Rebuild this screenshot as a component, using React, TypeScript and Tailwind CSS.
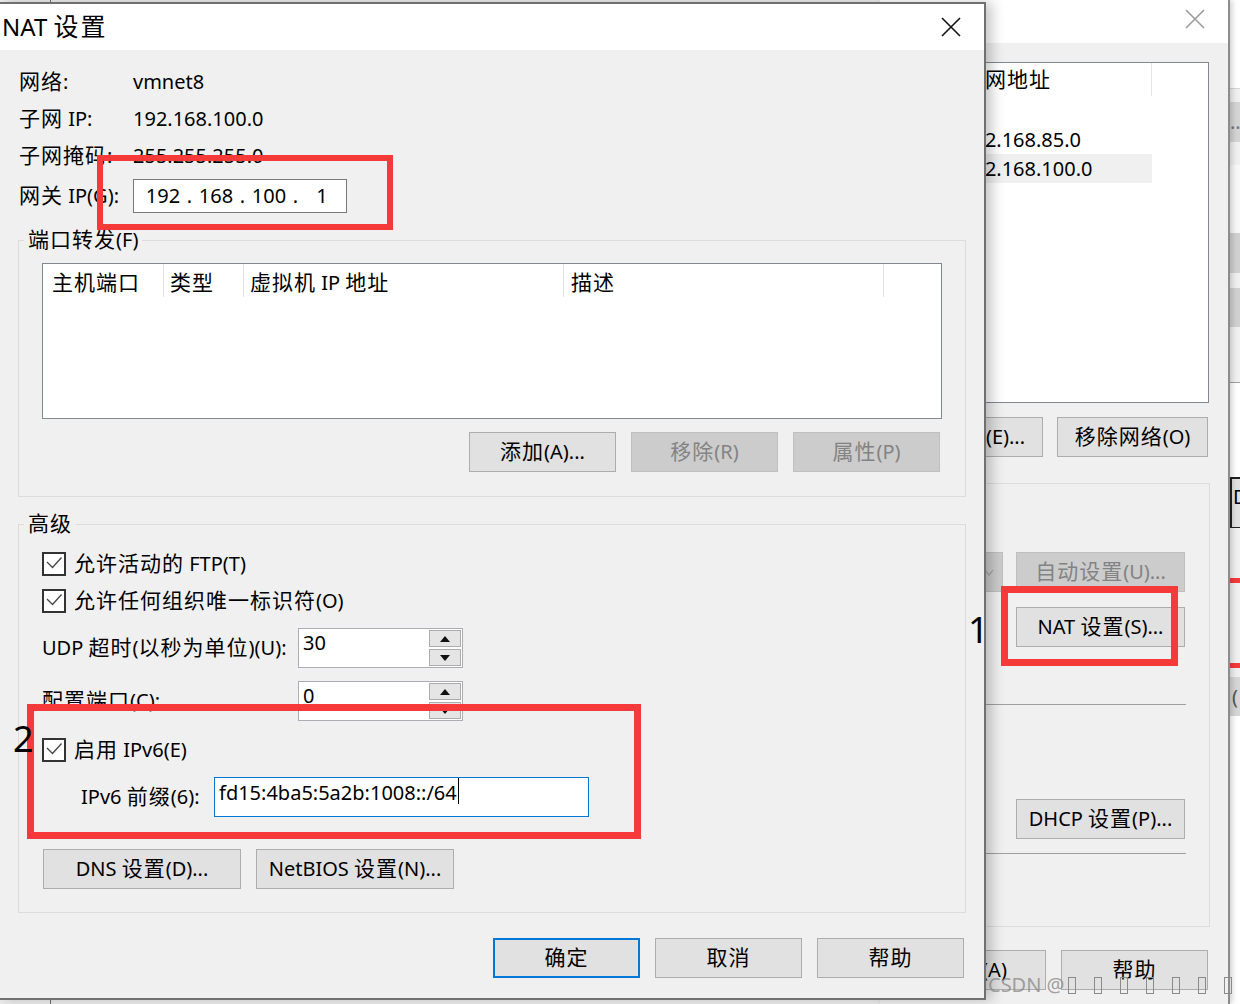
import clsx from "clsx";
import type { ReactNode } from "react";

const FONT = "font-['Noto_Sans','Noto_Sans_CJK_SC',sans-serif]";

// CJK runs render a touch larger than the latin text, as in the Windows dialog.
function cjk(s: string, big?: boolean): ReactNode[] {
  return s.split(/([\u2E80-\u9FFF\uF900-\uFAFF]+)/).map((part, i) =>
    /[\u2E80-\u9FFF\uF900-\uFAFF]/.test(part) ? (
      <span key={i} className={big ? "text-[25px] leading-none tracking-[2px]" : "text-[21px] leading-none tracking-[1px]"}>
        {part}
      </span>
    ) : (
      part
    ),
  );
}

type BtnProps = { label: string; w: string; disabled?: boolean; primary?: boolean; extra?: string };

function Btn({ label, w, disabled, primary, extra }: BtnProps) {
  return (
    <div
      className={clsx(
        "flex h-[40px] shrink-0 items-center justify-center whitespace-nowrap",
        w,
        extra,
        disabled
          ? "border border-[#bfbfbf] bg-[#cccccc] text-[#838383]"
          : primary
            ? "border-2 border-[#0078d7] bg-[#e1e1e1] text-black"
            : "border border-[#adadad] bg-[#e1e1e1] text-black",
      )}
    >
      <span>{cjk(label)}</span>
    </div>
  );
}

function CloseX({ color }: { color: string }) {
  return (
    <svg width="20" height="20" viewBox="0 0 20 20">
      <path d="M1 1 L19 19 M19 1 L1 19" stroke={color} strokeWidth="1.6" fill="none" />
    </svg>
  );
}

function Check({ label }: { label: string }) {
  return (
    <div className="flex h-[24px] items-center gap-[8px]">
      <svg width="24" height="24" viewBox="0 0 24 24" className="shrink-0">
        <rect x="1" y="1" width="22" height="22" fill="#fff" stroke="#333" strokeWidth="2" />
        <polyline points="5,10 10.5,15.5 19.5,5.5" fill="none" stroke="#444" strokeWidth="1.3" />
      </svg>
      <span className="whitespace-nowrap">{cjk(label)}</span>
    </div>
  );
}

function Arrow({ up }: { up?: boolean }) {
  return (
    <svg width="10" height="6" viewBox="0 0 10 6">
      <path d={up ? "M0 6 L5 0 L10 6 Z" : "M0 0 L5 6 L10 0 Z"} fill="#111" />
    </svg>
  );
}

function Spin({ value }: { value: string }) {
  return (
    <div className="flex h-[40px] w-[165px] border border-[#abadb3] bg-white">
      <div className="flex-1 pl-[4px] leading-[28px]">{value}</div>
      <div className="flex w-[33px] flex-col gap-[2px] py-px pr-px">
        <div className="flex flex-1 items-center justify-center border border-[#acacac] bg-[#e5e5e5]">
          <Arrow up />
        </div>
        <div className="flex flex-1 items-center justify-center border border-[#acacac] bg-[#e5e5e5]">
          <Arrow />
        </div>
      </div>
    </div>
  );
}

function InfoRow({ label, value }: { label: string; value: string }) {
  return (
    <div className="flex h-[37px] items-center">
      <span className="w-[114px] whitespace-nowrap">{cjk(label)}</span>
      <span>{value}</span>
    </div>
  );
}

function NatDialog() {
  const octets = ["192", "168", "100", "1"];
  return (
    <div className="absolute left-[-2px] top-[2px] flex h-[998px] w-[988px] flex-col border-2 border-[#707070] bg-[#f0f0f0] shadow-[6px_0_12px_rgba(0,0,0,0.22)]">
      <div className="flex h-[46px] shrink-0 items-center justify-between bg-white pl-[2px]">
        <span className="text-[24px] leading-[32px]">{cjk("NAT 设置", true)}</span>
        <div className="mr-[23px]">
          <CloseX color="#111" />
        </div>
      </div>

      <div className="flex flex-1 flex-col">
        <div className="flex flex-col pl-[19px] pt-[13px]">
          <InfoRow label="网络:" value="vmnet8" />
          <InfoRow label="子网 IP:" value="192.168.100.0" />
          <InfoRow label="子网掩码:" value="255.255.255.0" />
          <div className="mt-[5px] flex h-[34px] items-center">
            <span className="w-[114px] whitespace-nowrap">{cjk("网关 IP(G):")}</span>
            <div className="flex h-[34px] w-[214px] items-center border border-[#7a7a7a] bg-white pl-[6px]">
              {octets.map((o, i) => (
                <div key={i} className="flex items-center">
                  {i > 0 && <span className="w-[7px] text-center">.</span>}
                  <span className="w-[46px] text-center">{o}</span>
                </div>
              ))}
            </div>
          </div>
        </div>

        <fieldset className="ml-[18px] mt-[13px] w-[948px] border border-[#dcdcdc] p-0">
          <legend className="ml-[5px] h-[28px] px-[4px] leading-[28px]">{cjk("端口转发(F)")}</legend>
          <div className="flex flex-col pb-[24px] pl-[23px] pt-[9px]">
            <div className="h-[156px] w-[900px] border border-[#828790] bg-white">
              <div className="flex h-[33px] whitespace-nowrap">
                <div className="h-full w-[121px] border-r border-[#e5e5e5] pl-[9px] pt-[5px]">{cjk("主机端口")}</div>
                <div className="h-full w-[80px] border-r border-[#e5e5e5] pl-[6px] pt-[5px]">{cjk("类型")}</div>
                <div className="h-full w-[320px] border-r border-[#e5e5e5] pl-[6px] pt-[5px]">{cjk("虚拟机 IP 地址")}</div>
                <div className="h-full w-[320px] border-r border-[#e5e5e5] pl-[7px] pt-[5px]">{cjk("描述")}</div>
              </div>
            </div>
            <div className="mt-[13px] flex w-[898px] justify-end gap-[15px]">
              <Btn label="添加(A)..." w="w-[147px]" />
              <Btn label="移除(R)" w="w-[147px]" disabled />
              <Btn label="属性(P)" w="w-[147px]" disabled />
            </div>
          </div>
        </fieldset>

        <fieldset className="ml-[18px] mt-[13px] w-[948px] border border-[#dcdcdc] p-0">
          <legend className="ml-[5px] h-[28px] px-[4px] leading-[28px]">{cjk("高级")}</legend>
          <div className="flex flex-col pb-[23px] pl-[23px] pt-[14px]">
            <Check label="允许活动的 FTP(T)" />
            <div className="mt-[13px]">
              <Check label="允许任何组织唯一标识符(O)" />
            </div>
            <div className="mt-[15px] flex h-[40px] items-center">
              <span className="w-[256px] whitespace-nowrap">{cjk("UDP 超时(以秒为单位)(U):")}</span>
              <Spin value="30" />
            </div>
            <div className="mt-[13px] flex h-[40px] items-center">
              <span className="w-[256px] whitespace-nowrap">{cjk("配置端口(C):")}</span>
              <Spin value="0" />
            </div>
            <div className="mt-[17px]">
              <Check label="启用 IPv6(E)" />
            </div>
            <div className="ml-[39px] mt-[15px] flex h-[40px] items-center">
              <span className="w-[133px] whitespace-nowrap">{cjk("IPv6 前缀(6):")}</span>
              <div className="flex h-[40px] w-[375px] items-start border border-[#0078d7] bg-white pl-[4px]">
                <span className="pt-[2px] leading-[26px]">fd15:4ba5:5a2b:1008::/64</span>
                <span className="ml-px h-[26px] w-px bg-black" />
              </div>
            </div>
            <div className="ml-px mt-[32px] flex gap-[15px]">
              <Btn label="DNS 设置(D)..." w="w-[198px]" />
              <Btn label="NetBIOS 设置(N)..." w="w-[198px]" />
            </div>
          </div>
        </fieldset>

        <div className="mt-[25px] flex justify-end gap-[15px] pr-[20px]">
          <Btn label="确定" w="w-[147px]" primary />
          <Btn label="取消" w="w-[147px]" />
          <Btn label="帮助" w="w-[147px]" />
        </div>
      </div>
    </div>
  );
}

function NetworkEditor() {
  return (
    <div className="absolute left-[880px] top-0 flex h-[1004px] w-[350px] flex-col border-r-2 border-[#8c8c8c] bg-[#f0f0f0] shadow-[2px_0_6px_rgba(0,0,0,0.2)]">
      <div className="flex h-[43px] shrink-0 items-start justify-end bg-white pr-[23px] pt-[9px]">
        <CloseX color="#9a9a9a" />
      </div>
      <div className="flex flex-col items-end">
        <div className="mr-[19px] mt-[19px] h-[341px] w-[320px] border border-[#828790] bg-white">
          <div className="flex h-[33px] justify-end">
            <div className="h-full w-[197px] whitespace-nowrap border-r border-[#e5e5e5] pl-[8px] pt-[3px]">{cjk("子网地址")}</div>
            <div className="h-full w-[56px]" />
          </div>
          <div className="flex flex-col items-end pr-[56px]">
            <div className="h-[29px] w-[197px]" />
            <div className="h-[29px] w-[197px] pl-[7px] leading-[29px]">192.168.85.0</div>
            <div className="h-[29px] w-[197px] bg-[#f0f0f0] pl-[7px] leading-[29px]">192.168.100.0</div>
          </div>
        </div>
        <div className="mr-[20px] mt-[14px] flex gap-[14px]">
          <Btn label="添加网络(E)..." w="w-[147px]" extra="pr-[16px]" />
          <Btn label="移除网络(O)" w="w-[151px]" />
        </div>
        <div className="mr-[18px] mt-[26px] flex h-[444px] w-[320px] flex-col items-end border border-[#dcdcdc] pr-[24px] pt-[68px]">
          <div className="flex gap-[13px]">
            <div className="flex h-[40px] w-[120px] items-center justify-end border border-[#bfbfbf] bg-[#cccccc] pr-[8px]">
              <svg width="10" height="7" viewBox="0 0 10 7">
                <polyline points="1,1 5,6 9,1" fill="none" stroke="#a0a0a0" strokeWidth="1.2" />
              </svg>
            </div>
            <Btn label="自动设置(U)..." w="w-[169px]" disabled />
          </div>
          <div className="mt-[15px]">
            <Btn label="NAT 设置(S)..." w="w-[169px]" />
          </div>
          <div className="mr-[-1px] mt-[57px] h-px w-[250px] bg-[#a0a0a0]" />
          <div className="mt-[94px]">
            <Btn label="DHCP 设置(P)..." w="w-[169px]" />
          </div>
          <div className="mr-[-1px] mt-[14px] h-px w-[250px] bg-[#a0a0a0]" />
        </div>
        <div className="mr-[20px] mt-[23px] flex gap-[15px]">
          <Btn label="应用(A)" w="w-[147px]" />
          <Btn label="帮助" w="w-[147px]" />
        </div>
      </div>
    </div>
  );
}

function ThirdWindow() {
  return (
    <div className="absolute left-[1230px] top-0 flex h-[1004px] w-[10px] flex-col overflow-hidden bg-white">
      <div className="h-[88px] shrink-0 bg-white" />
      <div className="h-[14px] shrink-0 border-t border-[#d6d6d6] bg-[#f0f0f0]" />
      <div className="h-[40px] shrink-0 bg-[#d4d4d4] leading-[40px] text-[#777]">..</div>
      <div className="h-[23px] shrink-0 bg-[#f0f0f0]" />
      <div className="h-[68px] shrink-0 bg-[#f8f8f8]" />
      <div className="h-[40px] shrink-0 bg-[#d0d0d0]" />
      <div className="h-[15px] shrink-0 bg-[#f0f0f0]" />
      <div className="h-[39px] shrink-0 bg-[#d0d0d0]" />
      <div className="h-[55px] shrink-0 bg-[#f0f0f0]" />
      <div className="h-[95px] shrink-0 border-t border-[#a0a0a0] bg-white" />
      <div className="h-[51px] shrink-0 border-b border-l-2 border-t-2 border-[#222] bg-[#e1e1e1] pl-[1px] pt-[4px] leading-[28px]">D</div>
      <div className="h-[50px] shrink-0 bg-[#f0f0f0]" />
      <div className="h-[5px] shrink-0 bg-[#f63a3a]" />
      <div className="h-[80px] shrink-0 bg-[#f0f0f0]" />
      <div className="h-[5px] shrink-0 bg-[#f63a3a]" />
      <div className="h-[9px] shrink-0 bg-[#f0f0f0]" />
      <div className="h-[39px] shrink-0 bg-[#d6d6d6] pl-[2px] leading-[39px] text-[#555]">(</div>
      <div className="flex-1 bg-white" />
    </div>
  );
}

export default function App() {
  return (
    <div className={clsx("relative h-[1004px] w-[1240px] overflow-hidden bg-[#eeeeee] text-[20px] leading-[28px] text-black", FONT)}>
      <div className="absolute left-[50px] top-0 h-full w-px bg-[#6e6e6e]" />
      <ThirdWindow />
      <NetworkEditor />
      <NatDialog />

      {/* annotations drawn over the screenshot */}
      <div className="absolute left-[97px] top-[155px] h-[75px] w-[296px] border-[6px] border-[#f63a3a]" />
      <div className="absolute left-[27px] top-[704px] h-[135px] w-[614px] border-[7px] border-[#f63a3a]" />
      <div className="absolute left-[1001px] top-[586px] h-[80px] w-[177px] border-[7px] border-[#f63a3a]" />
      <div className="absolute left-[13px] top-[721px] text-[36px] leading-[36px]">2</div>
      <div className="absolute left-[968px] top-[612px] text-[36px] leading-[36px]">1</div>

      <div className="absolute left-[988px] top-[972px] flex items-center text-[20px] leading-[26px] text-[#8a8a8a]/80">
        <span>CSDN @</span>
        {[0, 1, 2, 3, 4, 5, 6].map((i) => (
          <span key={i} className={clsx("inline-block h-[17px] w-[8px] border border-[#8a8a8a]", i === 0 ? "ml-[3px]" : "ml-[18px]")} />
        ))}
      </div>
    </div>
  );
}
